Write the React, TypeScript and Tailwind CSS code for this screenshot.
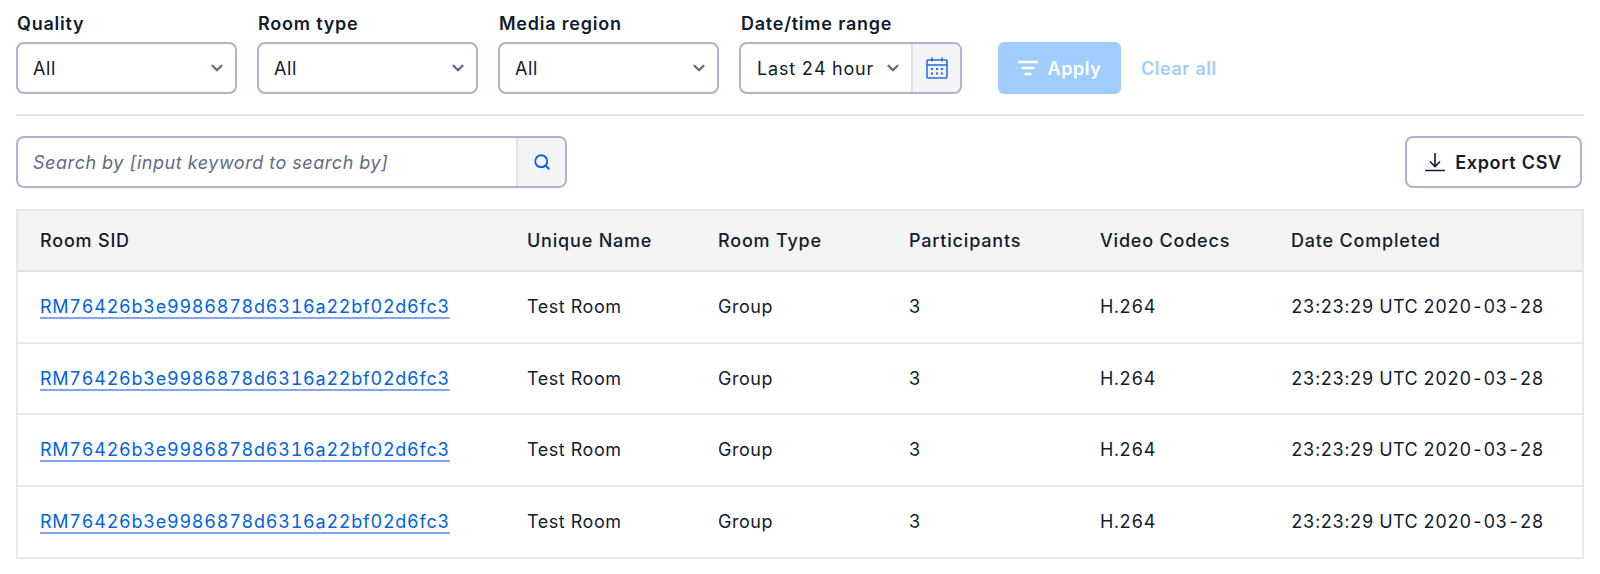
import { ChevronDown, Search } from 'lucide-react'

const columns = ['Room SID', 'Unique Name', 'Room Type', 'Participants', 'Video Codecs', 'Date Completed']
const rows = [1, 2, 3, 4]
const gridCols = 'grid grid-cols-[487px_191px_191px_191px_191px_1fr] items-center'

function Field({ label, value }: { label: string; value: string }) {
  return (
    <div className="w-[221px]">
      <div className="mb-[5px] h-[26px] pl-px leading-[26px] font-semibold tracking-[0.75px] text-[#121c2d]">{label}</div>
      <div className="flex h-[52px] items-center justify-between rounded-[8px] border-2 border-[#acb3ca] bg-white pr-[9px] pl-[15px]">
        <span className="text-[#121c2d]">{value}</span>
        <ChevronDown size={18} strokeWidth={3} className="text-[#606b85]" />
      </div>
    </div>
  )
}

function CalendarIcon() {
  return (
    <svg width="24" height="24" viewBox="0 0 24 24" fill="none" stroke="#1a6be0" strokeWidth="1.5">
      <rect x="2" y="4" width="20" height="18" rx="1" />
      <path d="M2 9h20M7 1.5v4M17 1.5v4" />
      <g fill="#1a6be0" stroke="none">
        <rect x="6" y="12" width="2" height="2" />
        <rect x="11" y="12" width="2" height="2" />
        <rect x="16" y="12" width="2" height="2" />
        <rect x="6" y="16.5" width="2" height="2" />
        <rect x="11" y="16.5" width="2" height="2" />
        <rect x="16" y="16.5" width="2" height="2" />
      </g>
    </svg>
  )
}

export default function App() {
  return (
    <div className="h-[574px] w-[1600px] overflow-hidden bg-white pt-[11px] font-['Inter',sans-serif] text-[18px] tracking-[0.55px] tabular-nums">
      <div className="ml-[16px] flex gap-[20px]">
        <Field label="Quality" value="All" />
        <Field label="Room type" value="All" />
        <Field label="Media region" value="All" />

        <div className="w-[223px]">
          <div className="mb-[5px] h-[26px] pl-[2px] leading-[26px] font-semibold tracking-[0.75px] text-[#121c2d]">Date/time range</div>
          <div className="flex h-[52px] overflow-hidden rounded-[8px] border-2 border-[#acb3ca] bg-white">
            <div className="flex flex-1 items-center justify-between border-r-2 border-[#e1e3ea] pr-[9px] pl-[16px]">
              <span className="tracking-[0.8px] whitespace-nowrap text-[#121c2d]">Last 24 hour</span>
              <ChevronDown size={18} strokeWidth={3} className="text-[#606b85]" />
            </div>
            <div className="flex w-[47px] items-center justify-center bg-[#f4f4f6]">
              <CalendarIcon />
            </div>
          </div>
        </div>

        <div className="mt-[31px] ml-[16px] flex h-[52px] items-center gap-[20px]">
          <button className="flex h-[52px] w-[123px] items-center justify-center gap-[10px] rounded-[6px] bg-[#a0cdfd] font-semibold text-white">
            <svg width="20" height="16" viewBox="0 0 20 16" fill="none" stroke="white" strokeWidth="2.4" strokeLinecap="round">
              <path d="M1 2h18M4.5 8h11M7.5 14h5" />
            </svg>
            Apply
          </button>
          <span className="font-semibold text-[#a0cdfd]">Clear all</span>
        </div>
      </div>

      <div className="mx-[16px] mt-[20px] h-[2px] bg-[#e1e3ea]" />

      <div className="mt-[20px] mr-[18px] ml-[16px] flex items-center justify-between">
        <div className="flex h-[52px] w-[551px] overflow-hidden rounded-[8px] border-2 border-[#acb3ca] bg-white">
          <div className="flex flex-1 items-center border-r-2 border-[#e1e3ea] pl-[15px] text-[#606b85] italic">
            Search by [input keyword to search by]
          </div>
          <div className="flex w-[47px] items-center justify-center bg-[#f4f4f6]">
            <Search size={18} strokeWidth={2.4} className="text-[#0263e0]" />
          </div>
        </div>
        <button className="flex h-[52px] w-[177px] items-center justify-center gap-[10px] rounded-[8px] border-2 border-[#acb3ca] bg-white font-semibold tracking-[0.65px] text-[#121c2d]">
          <svg width="20" height="20" viewBox="0 0 20 20" fill="none" stroke="#121c2d" strokeWidth="1.6">
            <path d="M10 1v13M5 9.5l5 5 5-5M0 18.5h20" />
          </svg>
          Export CSV
        </button>
      </div>

      <div className="mt-[21px] ml-[16px] w-[1568px] border-2 border-[#e8e9ee]">
        <div className={`${gridCols} h-[61px] border-b-2 border-[#e1e3ea] bg-[#f4f4f6] pl-[22px] font-medium tracking-[0.8px] text-[#121c2d]`}>
          {columns.map((c) => (
            <div key={c}>{c}</div>
          ))}
        </div>
        {rows.map((r, i) => (
          <div key={r} className={`${gridCols} pl-[22px] text-[#121c2d] ${i < rows.length - 1 ? 'h-[71.5px] border-b-2 border-[#e8e9ee]' : 'h-[70px]'}`}>
            <div>
              <a className="tracking-[0.76px] text-[#0263e0] underline decoration-[#7ea9f0] decoration-[1.5px] underline-offset-[4px]">RM76426b3e9986878d6316a22bf02d6fc3</a>
            </div>
            <div>Test Room</div>
            <div>Group</div>
            <div>3</div>
            <div>H.264</div>
            <div className="tracking-[0.4px] whitespace-nowrap">23:23:29 UTC 2020-03-28</div>
          </div>
        ))}
      </div>
    </div>
  )
}
